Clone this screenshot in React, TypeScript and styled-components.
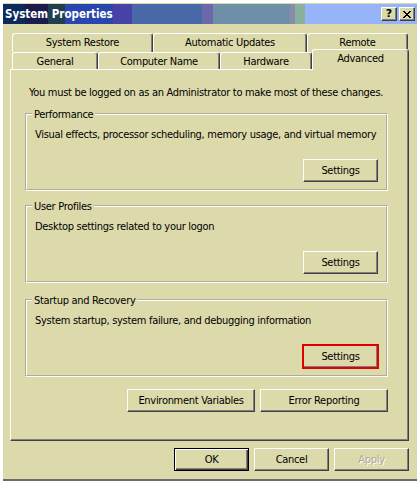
import React from 'react';
import styled, { createGlobalStyle, css } from 'styled-components';

const FACE = '#DCDAAB';

const Global = createGlobalStyle`
  html, body { margin: 0; padding: 0; background: #fff; }
  body {
    font-family: "DejaVu Sans Condensed", "Liberation Sans", sans-serif;
    font-size: 11px;
    letter-spacing: -0.3px;
    color: #000;
  }
  * { box-sizing: border-box; }
`;

const Window = styled.div`
  width: 414px;
  height: 478px;
  margin: 3px 0 0 3px;
  background: ${FACE};
  border-bottom: 2px solid #6b6b6b;
  display: flex;
  flex-direction: column;
`;

const TitleBar = styled.div`
  flex: none;
  margin-top: 1px;
  height: 20px;
  display: flex;
  align-items: center;
  justify-content: space-between;
  padding: 0 2px 0 2px;
  background: linear-gradient(
    to right,
    #0c2a5c 0 22px,
    #1a1c4c 22px 45px,
    #1f3f4f 45px 62px,
    #2a46ac 62px 110px,
    #4642a8 110px 129px,
    #4868a8 129px 199px,
    #6a68a8 199px 210px,
    #6f8ea8 210px 287px,
    #8a8aaa 287px 292px,
    #8ab0a0 292px 302px,
    #98b4f8 302px 100%
  );
`;

const TitleText = styled.span`
  color: #fff;
  font-weight: bold;
  font-size: 11.5px;
  letter-spacing: 0;
  line-height: 20px;
`;

const CaptionButtons = styled.div`
  display: flex;
  gap: 2px;
`;

const CaptionButton = styled.div`
  width: 16px;
  height: 14px;
  background: ${FACE};
  border: 1px solid;
  border-color: #fff #404040 #404040 #fff;
  box-shadow: inset -1px -1px #808080;
  display: flex;
  align-items: center;
  justify-content: center;
  font-weight: bold;
  font-size: 11px;
  line-height: 12px;
  letter-spacing: 0;
  font-family: "DejaVu Sans", sans-serif;
`;

const Content = styled.div`
  flex: 1;
  display: flex;
  flex-direction: column;
  padding: 9px 8px 0 7px;
`;

const TabStrip = styled.div`
  height: 36px;
  display: flex;
  flex-direction: column;
`;

const TabRow = styled.div<{ $front?: boolean }>`
  display: flex;
  padding-left: 2px;
  height: ${(p) => (p.$front ? 17 : 19)}px;
  align-items: flex-end;
`;

const Tab = styled.div<{ $w: number; $active?: boolean; $back?: boolean }>`
  flex: none;
  width: ${(p) => p.$w}px;
  background: ${FACE};
  border-top: 1px solid #fff;
  border-left: 1px solid #fff;
  border-right: 1px solid #404040;
  box-shadow: inset -1px 0 #808080;
  border-radius: 3px 3px 0 0;
  text-align: center;
  white-space: nowrap;
  ${(p) =>
    p.$active
      ? css`
          height: 21px;
          margin-bottom: -1px;
          padding-top: 2px;
          line-height: 13px;
          position: relative;
          z-index: 1;
        `
      : p.$back
      ? css`
          height: 19px;
          line-height: 18px;
        `
      : css`
          height: 17px;
          line-height: 17px;
        `}
`;

const Panel = styled.div`
  height: 372px;
  border-top: 1px solid #fff;
  border-left: 1px solid #fff;
  border-right: 1px solid #404040;
  border-bottom: 1px solid #404040;
  box-shadow: inset -1px -1px #808080;
  display: flex;
  flex-direction: column;
  padding: 16px 0 0 14px;
`;

const Notice = styled.div`
  padding-left: 4px;
  line-height: 14px;
  white-space: nowrap;
`;

const Group = styled.div<{ $space: number }>`
  position: relative;
  width: 363px;
  height: 78px;
  margin-top: ${(p) => p.$space}px;
  border: 2px groove #fffff4;
  padding: 13px 8px 7px 8px;
  display: flex;
  flex-direction: column;
`;

const Legend = styled.span`
  position: absolute;
  top: -7px;
  left: 5px;
  padding: 0 2px;
  line-height: 13px;
  background: ${FACE};
`;

const Description = styled.div`
  line-height: 14px;
  white-space: nowrap;
`;

const ButtonRow = styled.div<{ $gap: number }>`
  display: flex;
  justify-content: flex-end;
  gap: ${(p) => p.$gap}px;
`;

const PanelButtons = styled(ButtonRow)`
  width: 363px;
  margin-top: 12px;
`;

const Footer = styled(ButtonRow)`
  margin-top: 7px;
`;

const Push = styled.div`
  margin-top: auto;
  align-self: flex-end;
`;

const Button = styled.button<{ $w: number; $default?: boolean; $highlight?: boolean }>`
  width: ${(p) => p.$w}px;
  height: 23px;
  padding: 0;
  margin: 0;
  background: ${FACE};
  font: inherit;
  letter-spacing: inherit;
  color: #000;
  border: 1px solid;
  border-color: #fff #404040 #404040 #fff;
  box-shadow: inset -1px -1px #808080;
  ${(p) =>
    p.$default &&
    css`
      border-color: #000;
      box-shadow: inset 1px 1px #fff, inset -1px -1px #404040, inset -2px -2px #808080;
    `}
  ${(p) =>
    p.$highlight &&
    css`
      outline: 2px solid #e00000;
      outline-offset: -1px;
    `}
  &:disabled {
    color: #aca899;
    text-shadow: 1px 1px #fff;
  }
`;

const CloseIcon = () => (
  <svg width="8" height="7" viewBox="0 0 8 7" shapeRendering="crispEdges">
    <path
      d="M0 0h2v1h1v1h2V1h1V0h2v1H7v1H6v1H5v1h1v1h1v1h1v1H6V6H5V5H3v1H2v1H0V6h1V5h1V4h1V3H2V2H1V1H0z"
      fill="#000"
    />
  </svg>
);

const groups = [
  { title: 'Performance', text: 'Visual effects, processor scheduling, memory usage, and virtual memory', space: 13 },
  { title: 'User Profiles', text: 'Desktop settings related to your logon', space: 14 },
  { title: 'Startup and Recovery', text: 'System startup, system failure, and debugging information', space: 16, highlight: true },
];

export default function App() {
  return (
    <>
      <Global />
      <Window>
        <TitleBar>
          <TitleText>System Properties</TitleText>
          <CaptionButtons>
            <CaptionButton>?</CaptionButton>
            <CaptionButton>
              <CloseIcon />
            </CaptionButton>
          </CaptionButtons>
        </TitleBar>
        <Content>
          <TabStrip>
            <TabRow>
              <Tab $back $w={141}>System Restore</Tab>
              <Tab $back $w={154}>Automatic Updates</Tab>
              <Tab $back $w={101}>Remote</Tab>
            </TabRow>
            <TabRow $front>
              <Tab $w={86}>General</Tab>
              <Tab $w={122}>Computer Name</Tab>
              <Tab $w={92}>Hardware</Tab>
              <Tab $w={97} $active>Advanced</Tab>
            </TabRow>
          </TabStrip>
          <Panel>
            <Notice>You must be logged on as an Administrator to make most of these changes.</Notice>
            {groups.map((g) => (
              <Group key={g.title} $space={g.space}>
                <Legend>{g.title}</Legend>
                <Description>{g.text}</Description>
                <Push>
                  <Button $w={75} $highlight={g.highlight}>Settings</Button>
                </Push>
              </Group>
            ))}
            <PanelButtons $gap={5}>
              <Button $w={128}>Environment Variables</Button>
              <Button $w={128}>Error Reporting</Button>
            </PanelButtons>
          </Panel>
          <Footer $gap={5}>
            <Button $w={75} $default>OK</Button>
            <Button $w={75}>Cancel</Button>
            <Button $w={75} disabled>Apply</Button>
          </Footer>
        </Content>
      </Window>
    </>
  );
}
